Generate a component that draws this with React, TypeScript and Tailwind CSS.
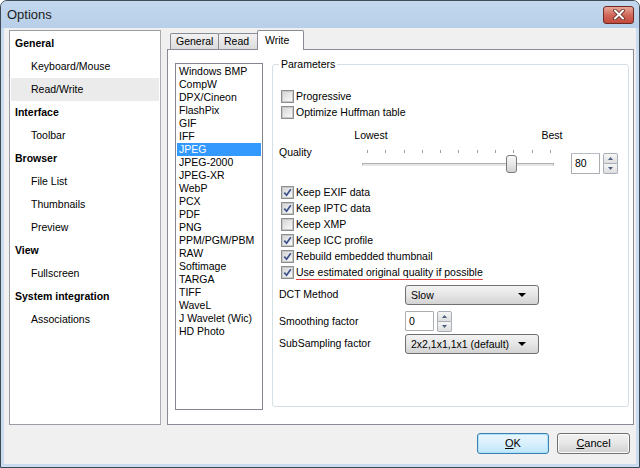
import React from "react";

const Check = ({ checked }: { checked?: boolean }) => (
  <span className="w-[13px] h-[13px] border border-[#8e8f8f] bg-[#f4f4f4] flex items-center justify-center shrink-0">
    <span className="w-[11px] h-[11px] border border-[#c8c8c8] bg-gradient-to-br from-[#d6d6d6] to-[#fafafa] flex items-center justify-center">
      {checked && (
        <svg width="9" height="9" viewBox="0 0 9 9">
          <path d="M1.3 4.6 L3.6 7.2 L7.8 1.2" fill="none" stroke="#3b4f8c" strokeWidth="1.7" />
        </svg>
      )}
    </span>
  </span>
);

const CheckRow = ({ checked, label, underline }: { checked?: boolean; label: string; underline?: boolean }) => (
  <div className="h-[16px] flex items-center gap-[2px] ml-[2px]">
    <Check checked={checked} />
    <span
      className={
        underline
          ? "underline decoration-[#e83e3e] decoration-[1px] underline-offset-[3px] whitespace-nowrap"
          : "whitespace-nowrap"
      }
    >
      {label}
    </span>
  </div>
);

const SpinButtons = () => (
  <div className="w-[15px] h-[21px] flex flex-col">
    <div className="flex-1 border border-[#a7aeb8] rounded-t-[2px] bg-gradient-to-b from-[#f6f6f6] to-[#dedede] flex items-center justify-center">
      <svg width="5" height="3" viewBox="0 0 5 3">
        <path d="M0 3 L2.5 0 L5 3 Z" fill="#4c607f" />
      </svg>
    </div>
    <div className="flex-1 border border-t-0 border-[#a7aeb8] rounded-b-[2px] bg-gradient-to-b from-[#f6f6f6] to-[#dedede] flex items-center justify-center">
      <svg width="5" height="3" viewBox="0 0 5 3">
        <path d="M0 0 L2.5 3 L5 0 Z" fill="#4c607f" />
      </svg>
    </div>
  </div>
);

const Combo = ({ value }: { value: string }) => (
  <div className="w-[134px] h-[20px] border border-[#707070] rounded-[3px] bg-gradient-to-b from-[#f3f3f3] via-[#e6e6e6] to-[#d3d3d3] flex items-center pl-[5px] pr-[12px]">
    <span className="whitespace-nowrap">{value}</span>
    <svg className="ml-auto" width="8" height="4" viewBox="0 0 8 4">
      <path d="M0 0 L8 0 L4 4 Z" fill="#000" />
    </svg>
  </div>
);

const navItems: { label: string; head?: boolean; sel?: boolean }[] = [
  { label: "General", head: true },
  { label: "Keyboard/Mouse" },
  { label: "Read/Write", sel: true },
  { label: "Interface", head: true },
  { label: "Toolbar" },
  { label: "Browser", head: true },
  { label: "File List" },
  { label: "Thumbnails" },
  { label: "Preview" },
  { label: "View", head: true },
  { label: "Fullscreen" },
  { label: "System integration", head: true },
  { label: "Associations" },
];

const formats = [
  "Windows BMP",
  "CompW",
  "DPX/Cineon",
  "FlashPix",
  "GIF",
  "IFF",
  "JPEG",
  "JPEG-2000",
  "JPEG-XR",
  "WebP",
  "PCX",
  "PDF",
  "PNG",
  "PPM/PGM/PBM",
  "RAW",
  "Softimage",
  "TARGA",
  "TIFF",
  "WaveL",
  "J Wavelet (Wic)",
  "HD Photo",
];

export default function App() {
  return (
    <div className="w-[640px] h-[468px] flex flex-col bg-[#c9dcf0] border border-[#3f4a57] rounded-t-[7px] overflow-hidden text-[10.5px] leading-[13px] text-black font-['Liberation_Sans',Arial,sans-serif]">
      {/* Title bar */}
      <div className="h-[27px] shrink-0 flex items-center pl-[6px] pr-[5px] bg-gradient-to-b from-[#c3d8ee] to-[#b8cfe9]">
        <span className="text-[13px] text-[#1b1b1b]">Options</span>
        <div className="ml-auto w-[31px] h-[18px] rounded-[3px] border border-[#6e2a22] bg-gradient-to-b from-[#e9a99b] via-[#d0675a] to-[#c24a3c] flex items-center justify-center">
          <svg width="12" height="11" viewBox="0 0 12 11">
            <path d="M2 1.5 L10 9.5 M10 1.5 L2 9.5" stroke="#5a2a24" strokeWidth="3.6" strokeLinecap="round" />
            <path d="M2 1.5 L10 9.5 M10 1.5 L2 9.5" stroke="#ffffff" strokeWidth="2" strokeLinecap="round" />
          </svg>
        </div>
      </div>

      {/* Client area */}
      <div className="flex-1 mx-[3px] mb-[3px] bg-[#f0f0f0] flex flex-col pl-[5px] pr-[2px] pt-[2px]">
        <div className="h-[395px] flex shrink-0">
          {/* Left navigation */}
          <div className="w-[152px] h-full border border-[#9a9da4] border-r-[#a9abb0] bg-white pt-[1px] px-[1px]">
            {navItems.map((it) => (
              <div
                key={it.label}
                className={
                  "h-[23px] flex items-center " +
                  (it.head ? "pl-[4px] font-bold " : "pl-[20px] ") +
                  (it.sel ? "bg-[#ebebeb]" : "")
                }
              >
                {it.label}
              </div>
            ))}
          </div>

          {/* Tab area */}
          <div className="flex-1 ml-[6px] flex flex-col">
            <div className="h-[19px] shrink-0 flex items-end pl-[3px] relative z-10">
              <div className="w-[49px] h-[16px] border border-b-0 border-[#898c95] bg-gradient-to-b from-[#f2f2f2] to-[#dcdcdc] flex items-center pl-[5px] rounded-t-[2px]">
                General
              </div>
              <div className="w-[41px] h-[16px] -ml-px border border-b-0 border-[#898c95] bg-gradient-to-b from-[#f2f2f2] to-[#dcdcdc] flex items-center pl-[5px] rounded-t-[2px]">
                Read
              </div>
              <div className="w-[47px] h-[20px] -ml-[2px] -mb-px border border-b-0 border-[#898c95] bg-white flex items-start pt-[3px] pl-[7px] rounded-t-[2px]">
                Write
              </div>
            </div>
            <div className="flex-1 border border-[#898c95] bg-white flex pl-[7px] pt-[13px]">
              {/* format list */}
              <div className="w-[88px] h-[347px] border border-[#828790] pt-[1px] px-[1px] shrink-0">
                {formats.map((f) => (
                  <div
                    key={f}
                    className={
                      "h-[13px] flex items-center pl-[2px] whitespace-nowrap " +
                      (f === "JPEG" ? "bg-[#3399ff] text-white" : "")
                    }
                  >
                    {f}
                  </div>
                ))}
              </div>

              {/* Parameters group */}
              <div className="ml-[9px] mt-[1px] w-[357px] h-[343px] border border-[#d5dfe5] rounded-[3px] relative flex flex-col pl-[6px] shrink-0">
                <span className="absolute -top-[7px] left-[6px] bg-white px-[2px]">Parameters</span>

                <div className="mt-[23px]" />
                <CheckRow label="Progressive" />
                <CheckRow label="Optimize Huffman table" />

                <div className="mt-[8px] h-[14px] flex items-center">
                  <span className="ml-[72px] w-[40px] text-center">Lowest</span>
                  <span className="ml-[146px] w-[30px] text-center">Best</span>
                </div>

                <div className="h-[34px] flex">
                  <div className="w-[83px] h-[20px] flex items-center">Quality</div>
                  <div className="w-[192px] h-[34px] relative">
                    <div className="absolute left-[5px] right-[3px] top-[8px] h-[4px] flex justify-between">
                      {Array.from({ length: 11 }).map((_, i) => (
                        <span key={i} className="w-px h-[3px] bg-[#a0a0a0]" />
                      ))}
                    </div>
                    <div className="absolute left-0 right-0 top-[21px] h-[3px] border border-[#b0b0b0] border-b-[#e8e8e8] bg-[#e4e4e4] rounded-[1px]" />
                    <div className="absolute left-[144px] top-[13px] w-[11px] h-[18px] border border-[#7a7a7a] rounded-[3px] bg-gradient-to-b from-[#f7f7f7] via-[#e8e8e8] to-[#d2d2d2]" />
                  </div>
                  <div className="ml-[17px] mt-[11px] w-[29px] h-[21px] border border-[#abadb3] border-t-[#b8bcc4] bg-white flex items-center pl-[3px] rounded-[1px]">
                    80
                  </div>
                  <div className="ml-[3px] mt-[11px]">
                    <SpinButtons />
                  </div>
                </div>

                <div className="mt-[8.5px]" />
                <CheckRow checked label="Keep EXIF data" />
                <CheckRow checked label="Keep IPTC data" />
                <CheckRow label="Keep XMP" />
                <CheckRow checked label="Keep ICC profile" />
                <CheckRow checked label="Rebuild embedded thumbnail" />
                <CheckRow checked underline label="Use estimated original quality if possible" />

                <div className="mt-[4.5px] h-[20px] flex items-center">
                  <span className="w-[126px] self-start pt-[3px]">DCT Method</span>
                  <Combo value="Slow" />
                </div>
                <div className="mt-[6px] h-[20px] flex items-center">
                  <span className="w-[126px]">Smoothing factor</span>
                  <div className="w-[29px] h-[20px] border border-[#abadb3] bg-white flex items-center pl-[3px] rounded-[1px]">
                    0
                  </div>
                  <div className="ml-[3px] h-[20px] flex">
                    <SpinButtons />
                  </div>
                </div>
                <div className="mt-[3px] h-[20px] flex items-center">
                  <span className="w-[126px] self-start pt-[3px]">SubSampling factor</span>
                  <Combo value="2x2,1x1,1x1 (default)" />
                </div>
              </div>
            </div>
          </div>
        </div>

        {/* Buttons */}
        <div className="mt-[8px] h-[21px] flex justify-end pr-[4px] gap-[8px]">
          <button className="w-[72px] h-[21px] border border-[#3c7fb1] rounded-[3px] bg-gradient-to-b from-[#eaf6fd] via-[#d9f0fc] to-[#bee6fd] shadow-[inset_0_0_0_1px_#aee2fb] text-[11px]">
            <span className="underline underline-offset-[1px]">O</span>K
          </button>
          <button className="w-[73px] h-[21px] border border-[#707070] rounded-[3px] bg-gradient-to-b from-[#f2f2f2] via-[#e6e6e6] to-[#d0d0d0] shadow-[inset_0_0_0_1px_#fbfbfb] text-[11px]">
            <span className="underline underline-offset-[1px]">C</span>ancel
          </button>
        </div>
      </div>
    </div>
  );
}
